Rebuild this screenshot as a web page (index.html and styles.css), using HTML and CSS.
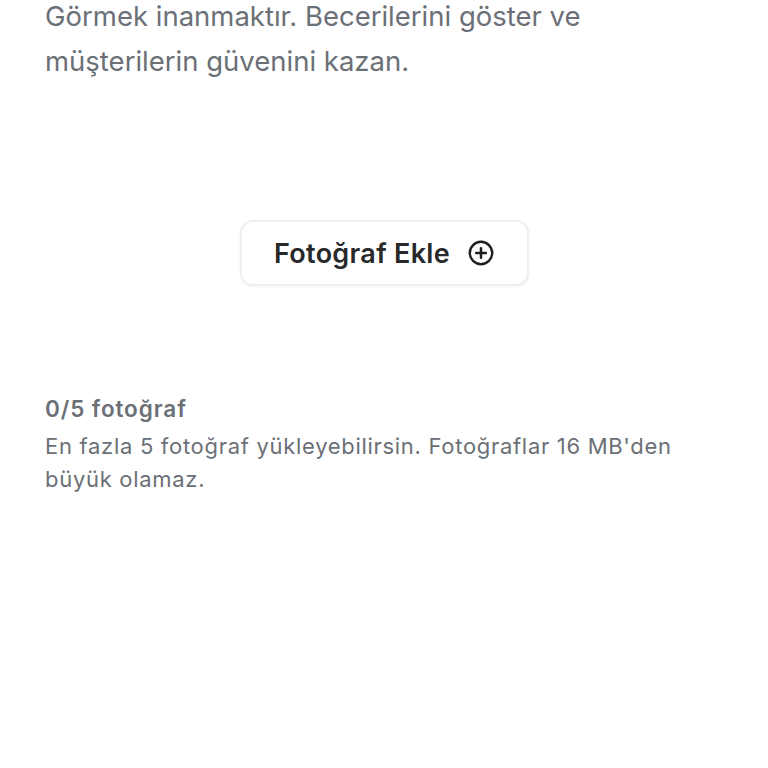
FILE: index.html
```html
<!DOCTYPE html>
<html lang="tr">
<head>
<meta charset="utf-8">
<link rel="stylesheet" href="styles.css">
</head>
<body>
<main class="page">
  <p class="intro">Görmek inanmaktır. Becerilerini göster ve müşterilerin güvenini kazan.</p>
  <div class="upload">
    <button class="add-btn" type="button">
      <span class="add-label">Fotoğraf Ekle</span>
      <svg class="add-icon" viewBox="0 0 26 26" width="26" height="26" aria-hidden="true">
        <circle cx="13" cy="13" r="11.2" fill="none" stroke="#1f1f1f" stroke-width="2.4"/>
        <path d="M13 8.2v9.6M8.2 13h9.6" stroke="#1f1f1f" stroke-width="2.5" stroke-linecap="round"/>
      </svg>
    </button>
  </div>
  <section class="info">
    <h2 class="count">0/5 fotoğraf</h2>
    <p class="note">En fazla 5 fotoğraf yükleyebilirsin. Fotoğraflar 16 MB'den büyük olamaz.</p>
  </section>
</main>
</body>
</html>
```
FILE: styles.css
```css
html, body {
  margin: 0;
  padding: 0;
  background: #ffffff;
}
body {
  font-family: Inter, "Open Sans", "Liberation Sans", sans-serif;
  color: #6b6f76;
}
.page {
  width: 768px;
  height: 768px;
  box-sizing: border-box;
  padding: 0 45px;
  overflow: hidden;
}
.intro {
  margin: -6px 0 0;
  font-size: 27.5px;
  line-height: 45px;
  color: #6b7077;
  width: 620px;
}
.upload {
  display: flex;
  justify-content: center;
  margin-top: 136px;
}
.add-btn {
  display: flex;
  align-items: center;
  justify-content: center;
  gap: 18px;
  height: 66px;
  width: 289px;
  box-sizing: border-box;
  background: #fff;
  border: 2px solid #efefef;
  border-radius: 13px;
  box-shadow: 0 1px 3px rgba(0,0,0,0.05);
  font-family: inherit;
  padding: 0;
  cursor: pointer;
}
.add-label {
  font-size: 27px;
  font-weight: 600;
  letter-spacing: 0.3px;
  color: #28292b;
}
.add-icon {
  display: block;
  flex: none;
}
.info {
  margin-top: 108px;
}
.count {
  margin: 0;
  font-size: 22.5px;
  line-height: 30px;
  font-weight: 600;
  letter-spacing: 0.9px;
  color: #6b6f76;
}
.note {
  margin: 6px 0 0;
  font-size: 22px;
  line-height: 33px;
  letter-spacing: 0.7px;
  color: #6b6f76;
  width: 680px;
}
```
